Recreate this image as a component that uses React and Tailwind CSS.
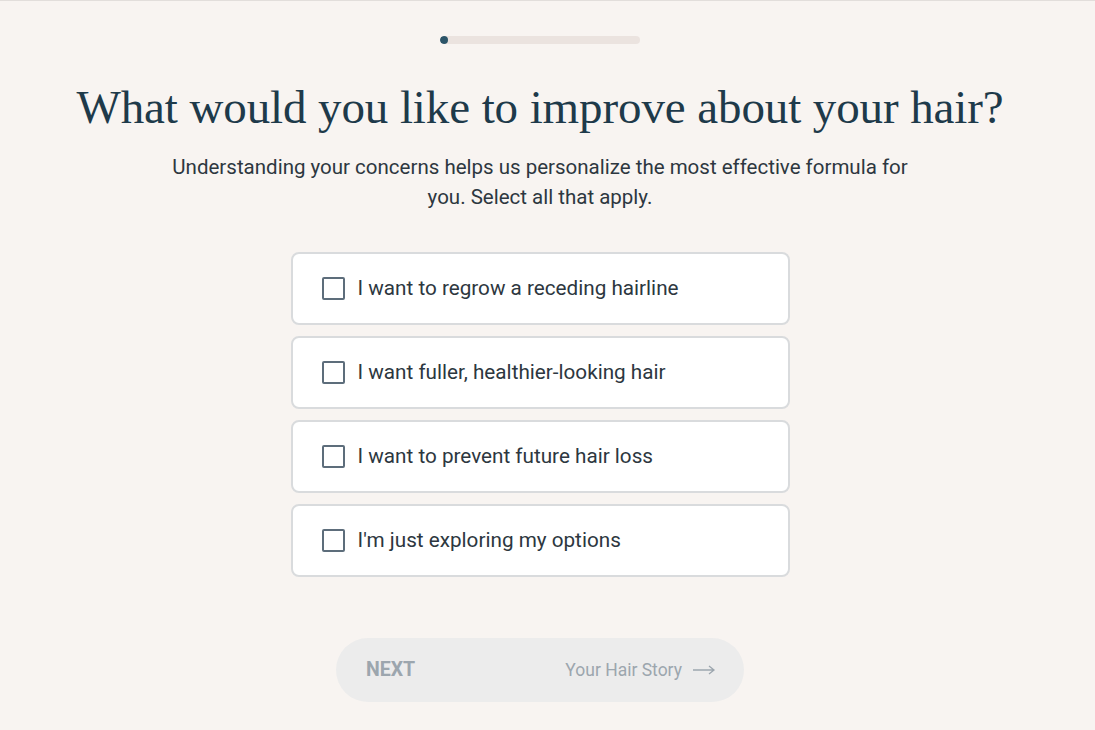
import React from 'react'

const options = [
  'I want to regrow a receding hairline',
  'I want fuller, healthier-looking hair',
  'I want to prevent future hair loss',
  "I'm just exploring my options",
]

export default function App() {
  return (
    <div className="min-h-[730px] w-full bg-[#f8f4f1] border-t border-[#e2dedb]" style={{ fontFamily: 'Roboto, sans-serif' }}>
      <div className="w-[1080px] flex flex-col items-center">
        {/* progress */}
        <div className="mt-[35px] w-[200px] h-[8px] rounded-full bg-[#ebe3df] overflow-hidden">
          <div className="h-full w-[8px] rounded-full bg-[#2b5468]"></div>
        </div>

        <h1 className="mt-[35px] text-[47px] leading-[56px] text-[#1e3a4a] tracking-[-0.1px]" style={{ fontFamily: '"Liberation Serif", serif' }}>
          What would you like to improve about your hair?
        </h1>

        <p className="mt-[17px] w-[760px] text-center text-[20.5px] leading-[30px] text-[#2d3740]">
          Understanding your concerns helps us personalize the most effective formula for you. Select all that apply.
        </p>

        <div className="mt-[40px] flex flex-col gap-[11px]">
          {options.map((opt) => (
            <label key={opt} className="w-[499px] h-[73px] bg-white border-2 border-[#d9dbdd] rounded-[8px] flex items-center pl-[29px] gap-[13px] cursor-pointer">
              <span className="w-[23px] h-[23px] border-2 border-[#5d6d7b] rounded-[2px] bg-white"></span>
              <span className="text-[20.7px] text-[#2d3740]">{opt}</span>
            </label>
          ))}
        </div>

        <button className="mt-[61px] w-[408px] h-[64px] rounded-full bg-[#ececec] flex items-center justify-between pl-[30px] pr-[28px]">
          <span className="text-[19.5px] font-bold text-[#9ca6ae]">NEXT</span>
          <span className="flex items-center gap-[10px] text-[17.5px] text-[#9ca6ae]">
            Your Hair Story
            <svg width="24" height="12" viewBox="0 0 24 12" fill="none" stroke="#9ca6ae" strokeWidth="1.3">
              <path d="M1 6h21M17 2l5 4-5 4" />
            </svg>
          </span>
        </button>
      </div>
    </div>
  )
}
